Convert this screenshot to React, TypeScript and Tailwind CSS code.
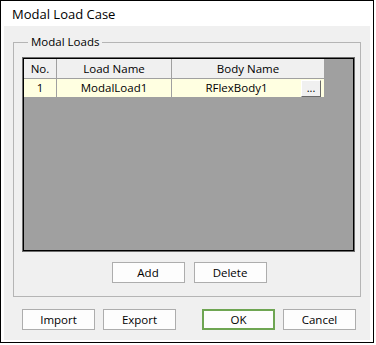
import { useState } from "react";

const FONT = { fontFamily: '"Open Sans", "Noto Sans", sans-serif' };

type Row = { no: number; load: string; body: string };

const ROWS: Row[] = [{ no: 1, load: "ModalLoad1", body: "RFlexBody1" }];

// plain white push button, 72x21
function Btn({ label, focused = false, className = "" }: { label: string; focused?: boolean; className?: string }) {
  return (
    <button
      className={
        "h-[21px] w-[73px] bg-[#fdfdfd] text-[11.5px] leading-none text-black flex items-center justify-center " +
        (focused ? "border-2 border-[#6ea552] " : "border border-[#adadad] ") +
        className
      }
    >
      {label}
    </button>
  );
}

export default function App() {
  const [rows] = useState<Row[]>(ROWS);

  return (
    <div className="w-[376px] h-[345px] bg-white" style={FONT}>
      <div className="w-[374px] h-[343px] border border-black flex flex-col">
        {/* title */}
        <div className="h-[25px] flex items-center pl-[11px] pt-[2px] text-[13px] text-black">Modal Load Case</div>

        <div className="flex-1 mx-[3px] mb-[2px] bg-[#f0f0f0] flex flex-col">
          {/* group box */}
          <fieldset className="mt-[8px] mx-[9px] h-[263px] border border-[#b5b5b5] pl-[8px]">
            <legend className="ml-[6px] px-[3px] text-[11.5px] leading-[16px] text-black">Modal Loads</legend>

            {/* grid */}
            <div className="mt-[7px] w-[333px] h-[195px] border border-[#6d6d6d]">
              <div className="w-full h-full border border-black bg-[#a0a0a0]">
                <div className="flex h-[20px] text-[11.5px] text-black">
                  <div className="w-[33px] bg-[#f0f0f0] border-r border-b border-[#a0a0a0] flex items-center justify-center">No.</div>
                  <div className="w-[115px] bg-[#f0f0f0] border-r border-b border-[#a0a0a0] flex items-center justify-center">Load Name</div>
                  <div className="w-[153px] bg-[#f0f0f0] border-r border-b border-[#a0a0a0] flex items-center justify-center">Body Name</div>
                </div>
                {rows.map((r) => (
                  <div key={r.no} className="flex h-[19px] text-[11.5px] text-black">
                    <div className="w-[33px] bg-[#ffffe1] border-r border-b border-[#a0a0a0] flex items-center justify-center">{r.no}</div>
                    <div className="w-[115px] bg-[#ffffe1] border-r border-b border-[#a0a0a0] flex items-center justify-center">{r.load}</div>
                    <div className="w-[153px] bg-[#ffffe1] border-r border-b border-[#a0a0a0] flex items-center pr-[3px]">
                      <span className="flex-1 text-center">{r.body}</span>
                      <button className="w-[20px] h-[17px] bg-[#f0f0f0] border border-t-white border-l-white border-r-[#696969] border-b-[#696969] text-[11px] leading-none flex items-end justify-center pb-[3px]">
                        ...
                      </button>
                    </div>
                  </div>
                ))}
              </div>
            </div>

            <div className="flex justify-center gap-[9px] mt-[10px] pr-[4px]">
              <Btn label="Add" className="w-[72px]" />
              <Btn label="Delete" className="w-[72px]" />
            </div>
          </fieldset>

          {/* dialog buttons */}
          <div className="flex mt-[12px] pl-[18px]">
            <Btn label="Import" />
            <Btn label="Export" className="ml-[8px]" />
            <Btn label="OK" focused className="ml-[26px]" />
            <Btn label="Cancel" className="ml-[8px] w-[72px]" />
          </div>
        </div>
      </div>
    </div>
  );
}
